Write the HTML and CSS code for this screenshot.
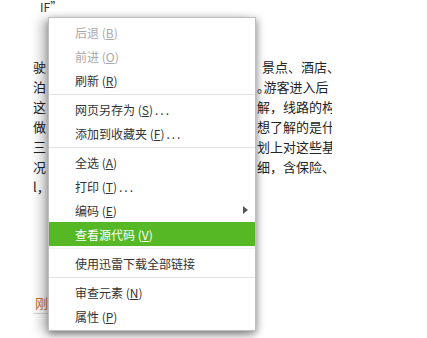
FILE: index.html
```html
<!DOCTYPE html>
<html lang="zh-CN">
<head>
<meta charset="utf-8">
<title>右键菜单</title>
<link rel="stylesheet" href="styles.css">
</head>
<body>
<div class="page">
  <div class="top-line">IF”</div>
  <div class="para">
    <div class="line"><span class="l">驶</span><span class="r indent">景点、酒店、</span></div>
    <div class="line"><span class="l">泊</span><span class="r">｡游客进入后</span></div>
    <div class="line"><span class="l">这</span><span class="r">解，线路的构</span></div>
    <div class="line"><span class="l">做</span><span class="r">想了解的是什</span></div>
    <div class="line"><span class="l">三</span><span class="r">划上对这些基</span></div>
    <div class="line"><span class="l">况</span><span class="r">细，含保险、</span></div>
    <div class="line"><span class="l">l，</span><span class="r"></span></div>
  </div>
  <div class="link-row"><span class="link">刚</span></div>
</div>

<div class="menu">
  <div class="item disabled">后退 (<u>B</u>)</div>
  <div class="item disabled">前进 (<u>O</u>)</div>
  <div class="item">刷新 (<u>R</u>)</div>
  <div class="sep"></div>
  <div class="item">网页另存为 (<u>S</u>)<span class="dots">...</span></div>
  <div class="item">添加到收藏夹 (<u>F</u>)<span class="dots">...</span></div>
  <div class="sep"></div>
  <div class="item">全选 (<u>A</u>)</div>
  <div class="item">打印 (<u>T</u>)<span class="dots">...</span></div>
  <div class="item">编码 (<u>E</u>)<span class="arrow"></span></div>
  <div class="item active">查看源代码 (<u>V</u>)</div>
  <div class="sep faint"></div>
  <div class="item">使用迅雷下载全部链接</div>
  <div class="sep"></div>
  <div class="item">审查元素 (<u>N</u>)</div>
  <div class="item">属性 (<u>P</u>)</div>
</div>
</body>
</html>
```

FILE: styles.css
```css
html, body {
  margin: 0;
  padding: 0;
}
body {
  width: 427px;
  height: 338px;
  overflow: hidden;
  position: relative;
  background: #ffffff;
  font-family: "Noto Sans CJK SC", "Noto Sans", sans-serif;
  color: #222;
}
.page {
  width: 299px;
  margin-left: 33px;
  overflow: hidden;
  font-size: 13px;
}
.top-line {
  height: 13px;
  line-height: 14px;
  font-size: 12px;
  padding-left: 7px;
  color: #333;
  overflow: hidden;
}
.para {
  margin-top: 44px;
}
.line {
  display: grid;
  grid-template-columns: 224px 1fr;
  height: 20px;
  line-height: 20px;
  white-space: nowrap;
}
.line .r {
  overflow: hidden;
}
.line .indent {
  padding-left: 5px;
}
.link-row {
  width: 120px;
  margin-top: 96px;
  height: 20px;
  line-height: 20px;
  border-bottom: 1px solid #d8d8d8;
}
.link {
  color: #c8742a;
  padding-left: 2px;
}

.menu {
  position: absolute;
  left: 48px;
  top: 17px;
  width: 208px;
  box-sizing: border-box;
  padding: 2px 0 2px;
  background: #ffffff;
  border: 1px solid #bfbfbf;
  box-shadow: 0 4px 7px rgba(0, 0, 0, 0.35), -8px 2px 10px rgba(0, 0, 0, 0.2), 4px 0 7px rgba(0, 0, 0, 0.12);
  font-size: 12px;
  color: #333;
}
.item {
  display: flex;
  align-items: center;
  height: 24px;
  padding: 0 7px 0 26px;
  white-space: nowrap;
}
.item u {
  text-underline-offset: 1px;
}
.item.disabled {
  color: #a9a9a9;
}
.item.active {
  background: #55b824;
  color: #ffffff;
}
.dots {
  letter-spacing: 2px;
  margin-left: 2px;
}
.arrow {
  margin-left: auto;
  width: 0;
  height: 0;
  border-top: 4px solid transparent;
  border-bottom: 4px solid transparent;
  border-left: 5px solid #555;
}
.sep {
  height: 1px;
  margin: 2px 0;
  background: #e2e2e2;
}
.sep.faint {
  background: #f2f2f2;
}
```
